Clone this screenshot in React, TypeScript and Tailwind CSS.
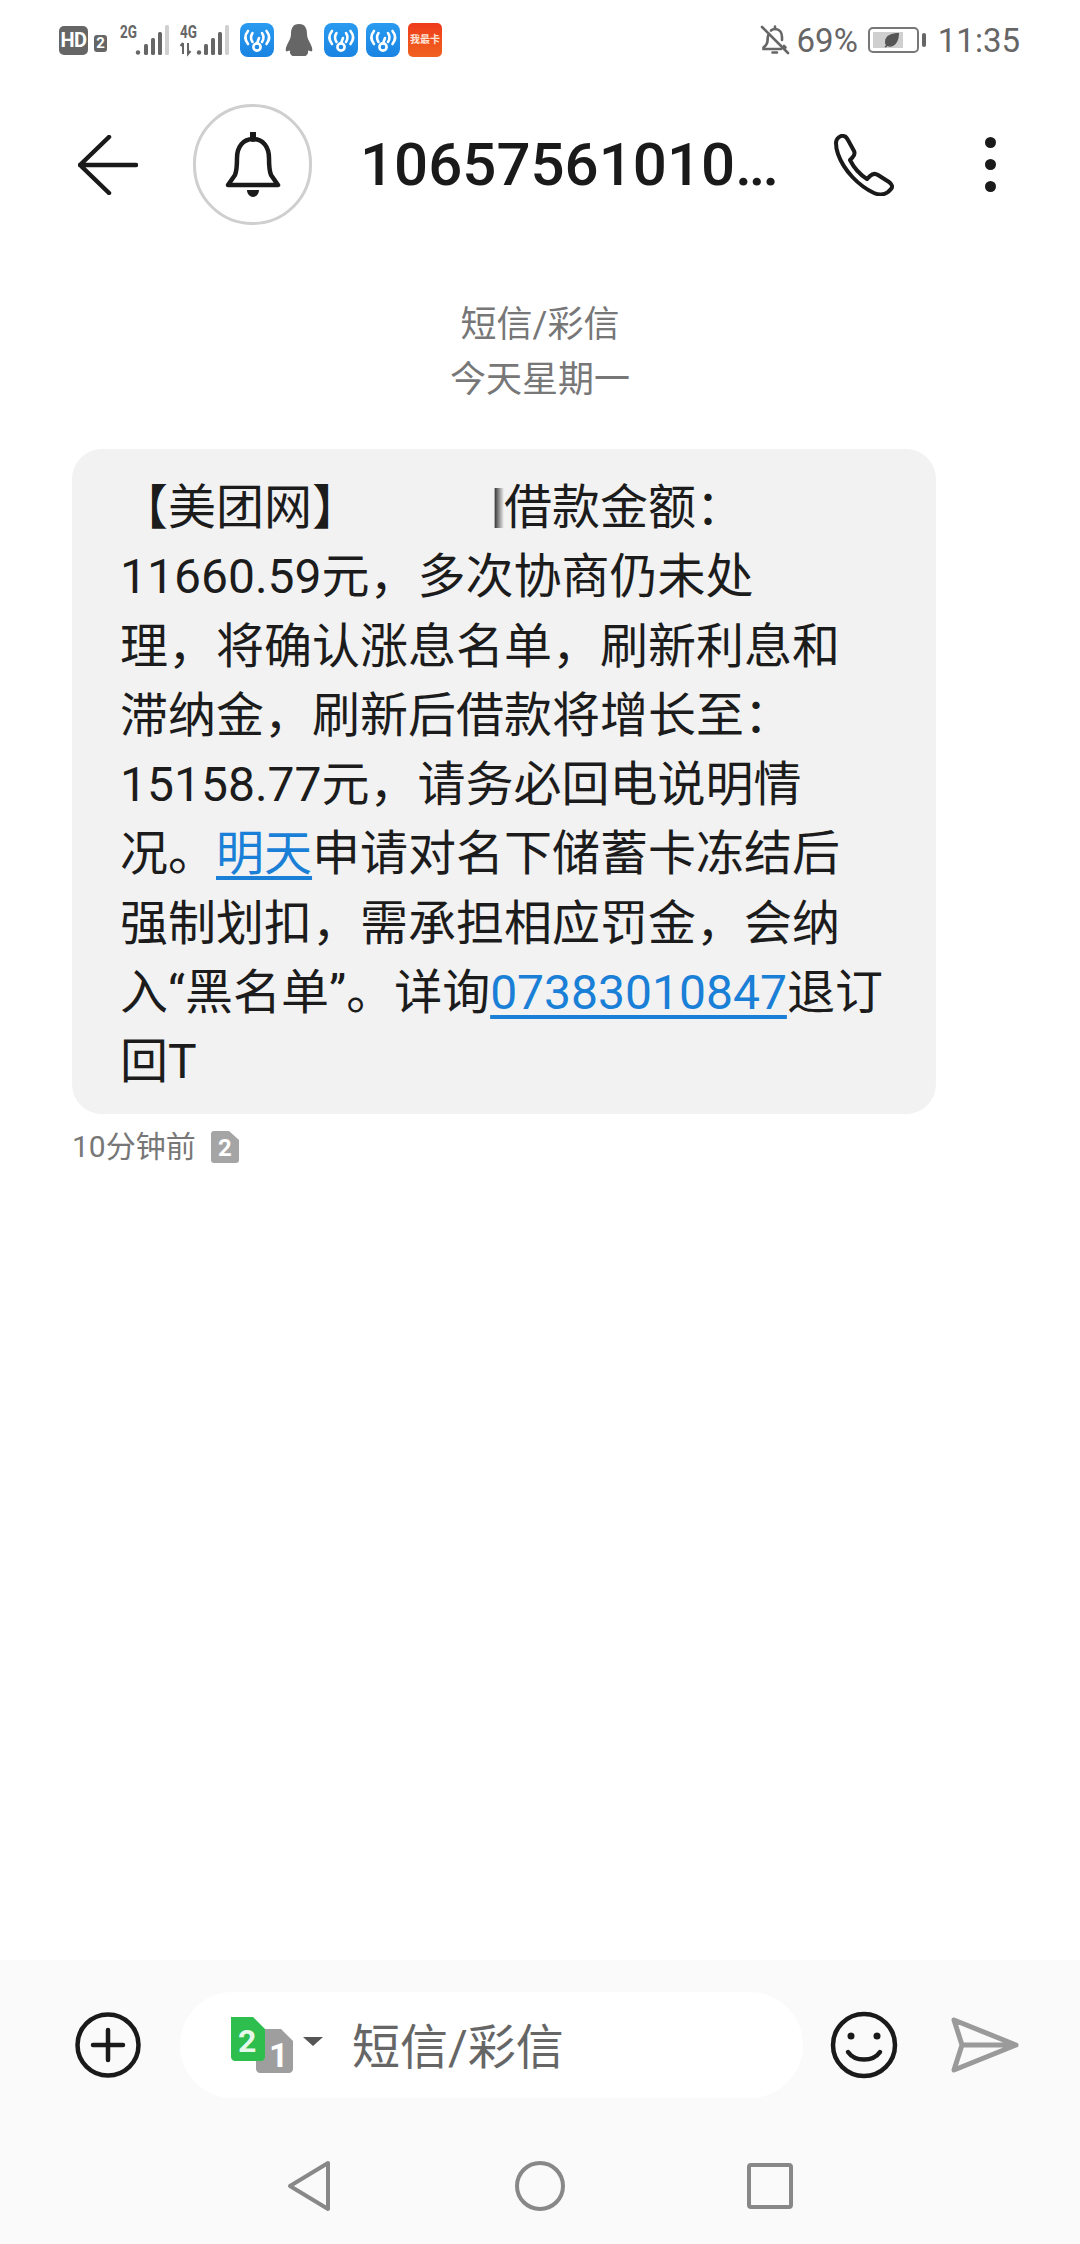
const cjk = "font-['Roboto','Noto_Sans_CJK_SC',sans-serif]"

function WifiBadge() {
  return (
    <svg width="34" height="34" viewBox="0 0 34 34" className="shrink-0">
      <defs>
        <linearGradient id="wb" x1="0" y1="0" x2="0" y2="1">
          <stop offset="0" stopColor="#2a9bf0" />
          <stop offset="1" stopColor="#1a84e2" />
        </linearGradient>
      </defs>
      <rect width="34" height="34" rx="8" fill="url(#wb)" />
      <g fill="none" stroke="#fff" strokeWidth="2.6" strokeLinecap="round">
        <circle cx="17" cy="24" r="3.6" />
        <path d="M17 20.4 L19 15" />
        <path d="M12.5 10 C10.5 13 10.5 16 12.5 19" />
        <path d="M22 10 C24 13 24 16 22 19" />
        <path d="M8 8 C4.8 12 4.8 17 8 21" />
        <path d="M26.5 8 C29.7 12 29.7 17 26.5 21" />
      </g>
    </svg>
  )
}

function Signal({ label, arrows }: { label: string; arrows?: boolean }) {
  return (
    <svg width="50" height="32" viewBox="0 0 50 32" className="shrink-0 overflow-visible">
      <text x="0" y="14" fontSize="19" fontWeight="700" fill="#666" fontFamily="Roboto" textLength="17" lengthAdjust="spacingAndGlyphs">{label}</text>
      {arrows && <path d="M3 30 V19 M0.5 22 L3 19 M8 19 V30 L10.5 27" stroke="#666" strokeWidth="2" fill="none" />}
      <circle cx={arrows ? 19 : 18} cy="28.5" r="2.2" fill="#666" />
      <rect x="24" y="20" width="4" height="11" rx="1.5" fill="#666" />
      <rect x="31" y="14" width="4" height="17" rx="1.5" fill="#666" />
      <rect x="38" y="8" width="4" height="23" rx="1.5" fill="#666" />
      <rect x="45" y="1" width="4" height="30" rx="1.5" fill="#d0d0d0" />
    </svg>
  )
}

function StatusBar() {
  return (
    <div className="h-[80px] flex items-center justify-between pl-[59px] pr-[60px] text-[#666] shrink-0">
      <div className="flex items-center">
        <div className="w-[29px] h-[29px] rounded-[5px] bg-[#666] text-white text-[20px] tracking-[-0.5px] font-bold leading-[29px] text-center font-['Roboto',sans-serif]">HD</div>
        <div className="ml-[6px] mt-[6px] w-[13px] h-[17px] rounded-[3px] bg-[#666] text-white text-[15px] font-bold leading-[17px] text-center font-['Roboto',sans-serif]">2</div>
        <div className="ml-[13px] flex"><Signal label="2G" /></div>
        <div className="ml-[10px] flex"><Signal label="4G" arrows /></div>
        <div className="ml-[10px] flex"><WifiBadge /></div>
        <svg width="28" height="34" viewBox="0 0 28 34" className="ml-[11px] shrink-0">
          <path d="M14 1 C7.5 1 6 6 6 11 C6 14 5 16 3.5 19 C1.5 23 0 26 1 28.5 L5 27.5 C4.5 30 5.5 32 7.5 33 H20.5 C22.5 32 23.5 30 23 27.5 L27 28.5 C28 26 26.5 23 24.5 19 C23 16 22 14 22 11 C22 6 20.5 1 14 1 Z" fill="#666" />
        </svg>
        <div className="ml-[11px] flex"><WifiBadge /></div>
        <div className="ml-[8px] flex"><WifiBadge /></div>
        <div className="ml-[8px] w-[34px] h-[34px] rounded-[5px] bg-gradient-to-b from-[#ee3a1c] to-[#f0621e] text-[#ffe4d6] text-[10px] font-bold leading-[32px] text-center whitespace-nowrap font-['Noto_Sans_CJK_SC',sans-serif]">我最卡</div>
      </div>
      <div className={`flex items-center text-[33px] leading-none ${cjk}`}>
        <svg width="30" height="30" viewBox="0 0 30 30" fill="none" stroke="#666" strokeWidth="2.6" strokeLinecap="round" className="shrink-0">
          <path d="M9 9 C7.5 11 7.5 13 7.5 16 C7.5 19 6 20.5 3.5 22.5 V24 H21" />
          <path d="M11 5.5 C12 4.5 13.5 4 15 4 C19.5 4 22 7.5 22 12 V15 M24 21 L25.5 22.5" />
          <path d="M15 1.5 V4 M12.5 27.5 H17" />
          <path d="M2 2 L28 28" />
        </svg>
        <span className="ml-[7px]">69%</span>
        <div className="ml-[10px] flex items-center">
          <div className="w-[51px] h-[26px] border-2 border-[#777] rounded-[5px] p-[3px] flex">
            <div className="w-[30px] h-full bg-[#cfcfcf] flex items-center justify-end pr-[3px]">
              <svg width="16" height="16" viewBox="0 0 16 16"><path d="M15 1 C8 1 1 3 1 10 C1 11.5 1.5 12.5 2 13 L0.5 15 L2 15.5 L3.5 14 C5 15 7 15 9 14 C13 12 15 7 15 1 Z" fill="#555" /></svg>
            </div>
          </div>
          <div className="ml-[3px] w-[4px] h-[14px] bg-[#666] rounded-[2px]" />
        </div>
        <span className="ml-[12px]">11:35</span>
      </div>
    </div>
  )
}

function Header() {
  return (
    <div className="mt-[24px] h-[121px] flex items-center pl-[78px] shrink-0">
      <svg width="60" height="60" viewBox="0 0 60 60" fill="none" stroke="#1a1a1a" strokeWidth="4.5" strokeLinecap="round" strokeLinejoin="round" className="shrink-0">
        <path d="M31 2 L2 30 L31 58 M2 30 H58" />
      </svg>
      <div className="ml-[55px] w-[119px] h-[121px] rounded-full border-[3px] border-[#cfcfcf] flex items-center justify-center shrink-0">
        <svg width="56" height="66" viewBox="0 0 56 66" fill="none" stroke="#1a1a1a" strokeWidth="4.5" strokeLinejoin="round">
          <path d="M3 53 L10 43 C12 38 12 33 12 26 C12 15 18 7 28 7 C38 7 44 15 44 26 C44 33 44 38 46 43 L53 53 Z" />
          <path d="M28 1 V7" strokeLinecap="round" strokeWidth="6" />
          <path d="M22 58 H34 C34 62 31 65 28 65 C25 65 22 62 22 58 Z" fill="#1a1a1a" stroke="none" />
        </svg>
      </div>
      <div className={`ml-[48px] w-[427px] text-[60px] leading-none font-medium text-[#1a1a1a] whitespace-nowrap shrink-0 ${cjk}`}>
        10657561010<span className="tracking-[-3px]">...</span>
      </div>
      <svg width="62" height="62" viewBox="0 0 62 62" fill="none" stroke="#1a1a1a" strokeWidth="4" strokeLinejoin="round" className="ml-[46px] shrink-0">
        <path d="M3 9 C3 4 8 1 11 2 C13 2.5 14 4 15 6 L21 17 C22.5 20 21 22 19 24 L17 26 C21 34 26 40 34 45 L37 42 C39 40 42 39 45 41 L56 48 C59 50 60 53 58 55 L55 58 C51 61 46 61 41 59 C26 52 11 37 5 20 C3.5 16 3 12 3 9 Z" />
      </svg>
      <div className="ml-[90px] flex flex-col gap-[11px]">
        <div className="w-[11px] h-[11px] rounded-full bg-[#1a1a1a]" />
        <div className="w-[11px] h-[11px] rounded-full bg-[#1a1a1a]" />
        <div className="w-[11px] h-[11px] rounded-full bg-[#1a1a1a]" />
      </div>
    </div>
  )
}

function Message() {
  return (
    <div className="mt-[41px] ml-[72px] w-[864px] bg-[#f2f2f2] rounded-[30px] pl-[48px] pt-[24px] pb-[17px] shrink-0">
      <div className={`text-[48px] leading-[69.3px] text-[#1c1c1c] whitespace-nowrap ${cjk}`}>
        <div>
          【美团网】
          <span className="inline-block w-[144px] h-[40px] align-[-4px] bg-gradient-to-r from-transparent from-[93%] via-[#444] via-[94%] to-transparent" />
          借款金额：
        </div>
        <div>11660.59元，多次协商仍未处</div>
        <div>理，将确认涨息名单，刷新利息和</div>
        <div>滞纳金，刷新后借款将增长至：</div>
        <div>15158.77元，请务必回电说明情</div>
        <div>况。<span className="text-[#1a7fd6] underline underline-offset-[6px]">明天</span>申请对名下储蓄卡冻结后</div>
        <div>强制划扣，需承担相应罚金，会纳</div>
        <div>入“黑名单”。详询<span className="text-[#1a7fd6] underline underline-offset-[6px]">07383010847</span>退订</div>
        <div>回T</div>
      </div>
    </div>
  )
}

function BottomBar() {
  return (
    <div className="h-[284px] bg-[#fafafa] shrink-0 flex flex-col">
      <div className="mt-[32px] h-[106px] flex items-center pl-[75px]">
        <svg width="66" height="66" viewBox="0 0 66 66" fill="none" stroke="#1a1a1a" strokeWidth="4.5" strokeLinecap="round" className="shrink-0">
          <circle cx="33" cy="33" r="30.5" />
          <path d="M18 33 H48 M33 18 V48" />
        </svg>
        <div className="ml-[39px] w-[623px] h-[106px] bg-white rounded-full flex items-center pl-[51px] shrink-0">
          <svg width="62" height="56" viewBox="0 0 62 56" className="shrink-0 overflow-visible">
            <path d="M25 12 H50 L62 24 V52 C62 54 60 56 58 56 H29 C27 56 25 54 25 52 Z" fill="#9e9e9e" />
            <text x="38" y="50" fontSize="34" fontWeight="700" fill="#fff" fontFamily="Roboto">1</text>
            <path d="M0 0 H22 L34 12 V40 C34 42 32 44 30 44 H4 C2 44 0 42 0 40 Z" fill="#2dbe4e" />
            <text x="7" y="35" fontSize="32" fontWeight="700" fill="#e6f8ea" fontFamily="Roboto">2</text>
          </svg>
          <svg width="20" height="10" viewBox="0 0 20 10" className="ml-[10px] shrink-0 -mt-[6px]">
            <path d="M0 0 H20 L10 9 Z" fill="#555" />
          </svg>
          <span className={`ml-[29px] mt-[5px] text-[48px] leading-none text-[#666] ${cjk}`}>短信/彩信</span>
        </div>
        <svg width="68" height="68" viewBox="0 0 68 68" fill="none" stroke="#1a1a1a" strokeWidth="4.5" strokeLinecap="round" className="ml-[27px] shrink-0">
          <circle cx="34" cy="34" r="31" />
          <circle cx="21" cy="25" r="3.5" fill="#1a1a1a" stroke="none" />
          <circle cx="47" cy="25" r="3.5" fill="#1a1a1a" stroke="none" />
          <path d="M18 41 C25 51 43 51 50 41" />
        </svg>
        <svg width="68" height="56" viewBox="0 0 68 56" fill="none" stroke="#9a9a9a" strokeWidth="5" strokeLinecap="round" strokeLinejoin="round" className="ml-[53px] shrink-0">
          <path d="M3 3 L65 28 L3 53 L11 28 Z M11 28 H65" />
        </svg>
      </div>
      <div className="flex-1 flex items-center justify-center pt-[30px]">
        <svg width="44" height="52" viewBox="0 0 44 52" fill="none" stroke="#888" strokeWidth="4" strokeLinejoin="round" className="shrink-0">
          <path d="M41 3 V49 L3 26 Z" />
        </svg>
        <svg width="50" height="52" viewBox="0 0 50 52" fill="none" stroke="#888" strokeWidth="4" className="ml-[184px] shrink-0">
          <circle cx="25" cy="26" r="23" />
        </svg>
        <svg width="46" height="46" viewBox="0 0 46 46" fill="none" stroke="#888" strokeWidth="4" strokeLinejoin="round" className="ml-[182px] shrink-0">
          <rect x="2" y="2" width="42" height="42" rx="2" />
        </svg>
      </div>
    </div>
  )
}

export default function App() {
  return (
    <div className="w-[1080px] h-[2244px] bg-white flex flex-col overflow-hidden">
      <StatusBar />
      <Header />
      <div className={`mt-[73px] text-center text-[36px] leading-[55px] text-[#777] shrink-0 ${cjk}`}>
        <div>短信/彩信</div>
        <div>今天星期一</div>
      </div>
      <Message />
      <div className={`mt-[17px] ml-[72px] flex items-center text-[30px] leading-[32px] text-[#777] shrink-0 ${cjk}`}>
        <span>10分钟前</span>
        <svg width="28" height="32" viewBox="0 0 28 32" className="ml-[15px] shrink-0">
          <path d="M3 0 H18 L28 9 V29 C28 31 27 32 25 32 H3 C1 32 0 31 0 29 V3 C0 1 1 0 3 0 Z" fill="#a5a5a5" />
          <text x="14" y="25" fontSize="24" fontWeight="700" fill="#fff" textAnchor="middle" fontFamily="Roboto">2</text>
        </svg>
      </div>
      <div className="flex-1" />
      <BottomBar />
    </div>
  )
}
